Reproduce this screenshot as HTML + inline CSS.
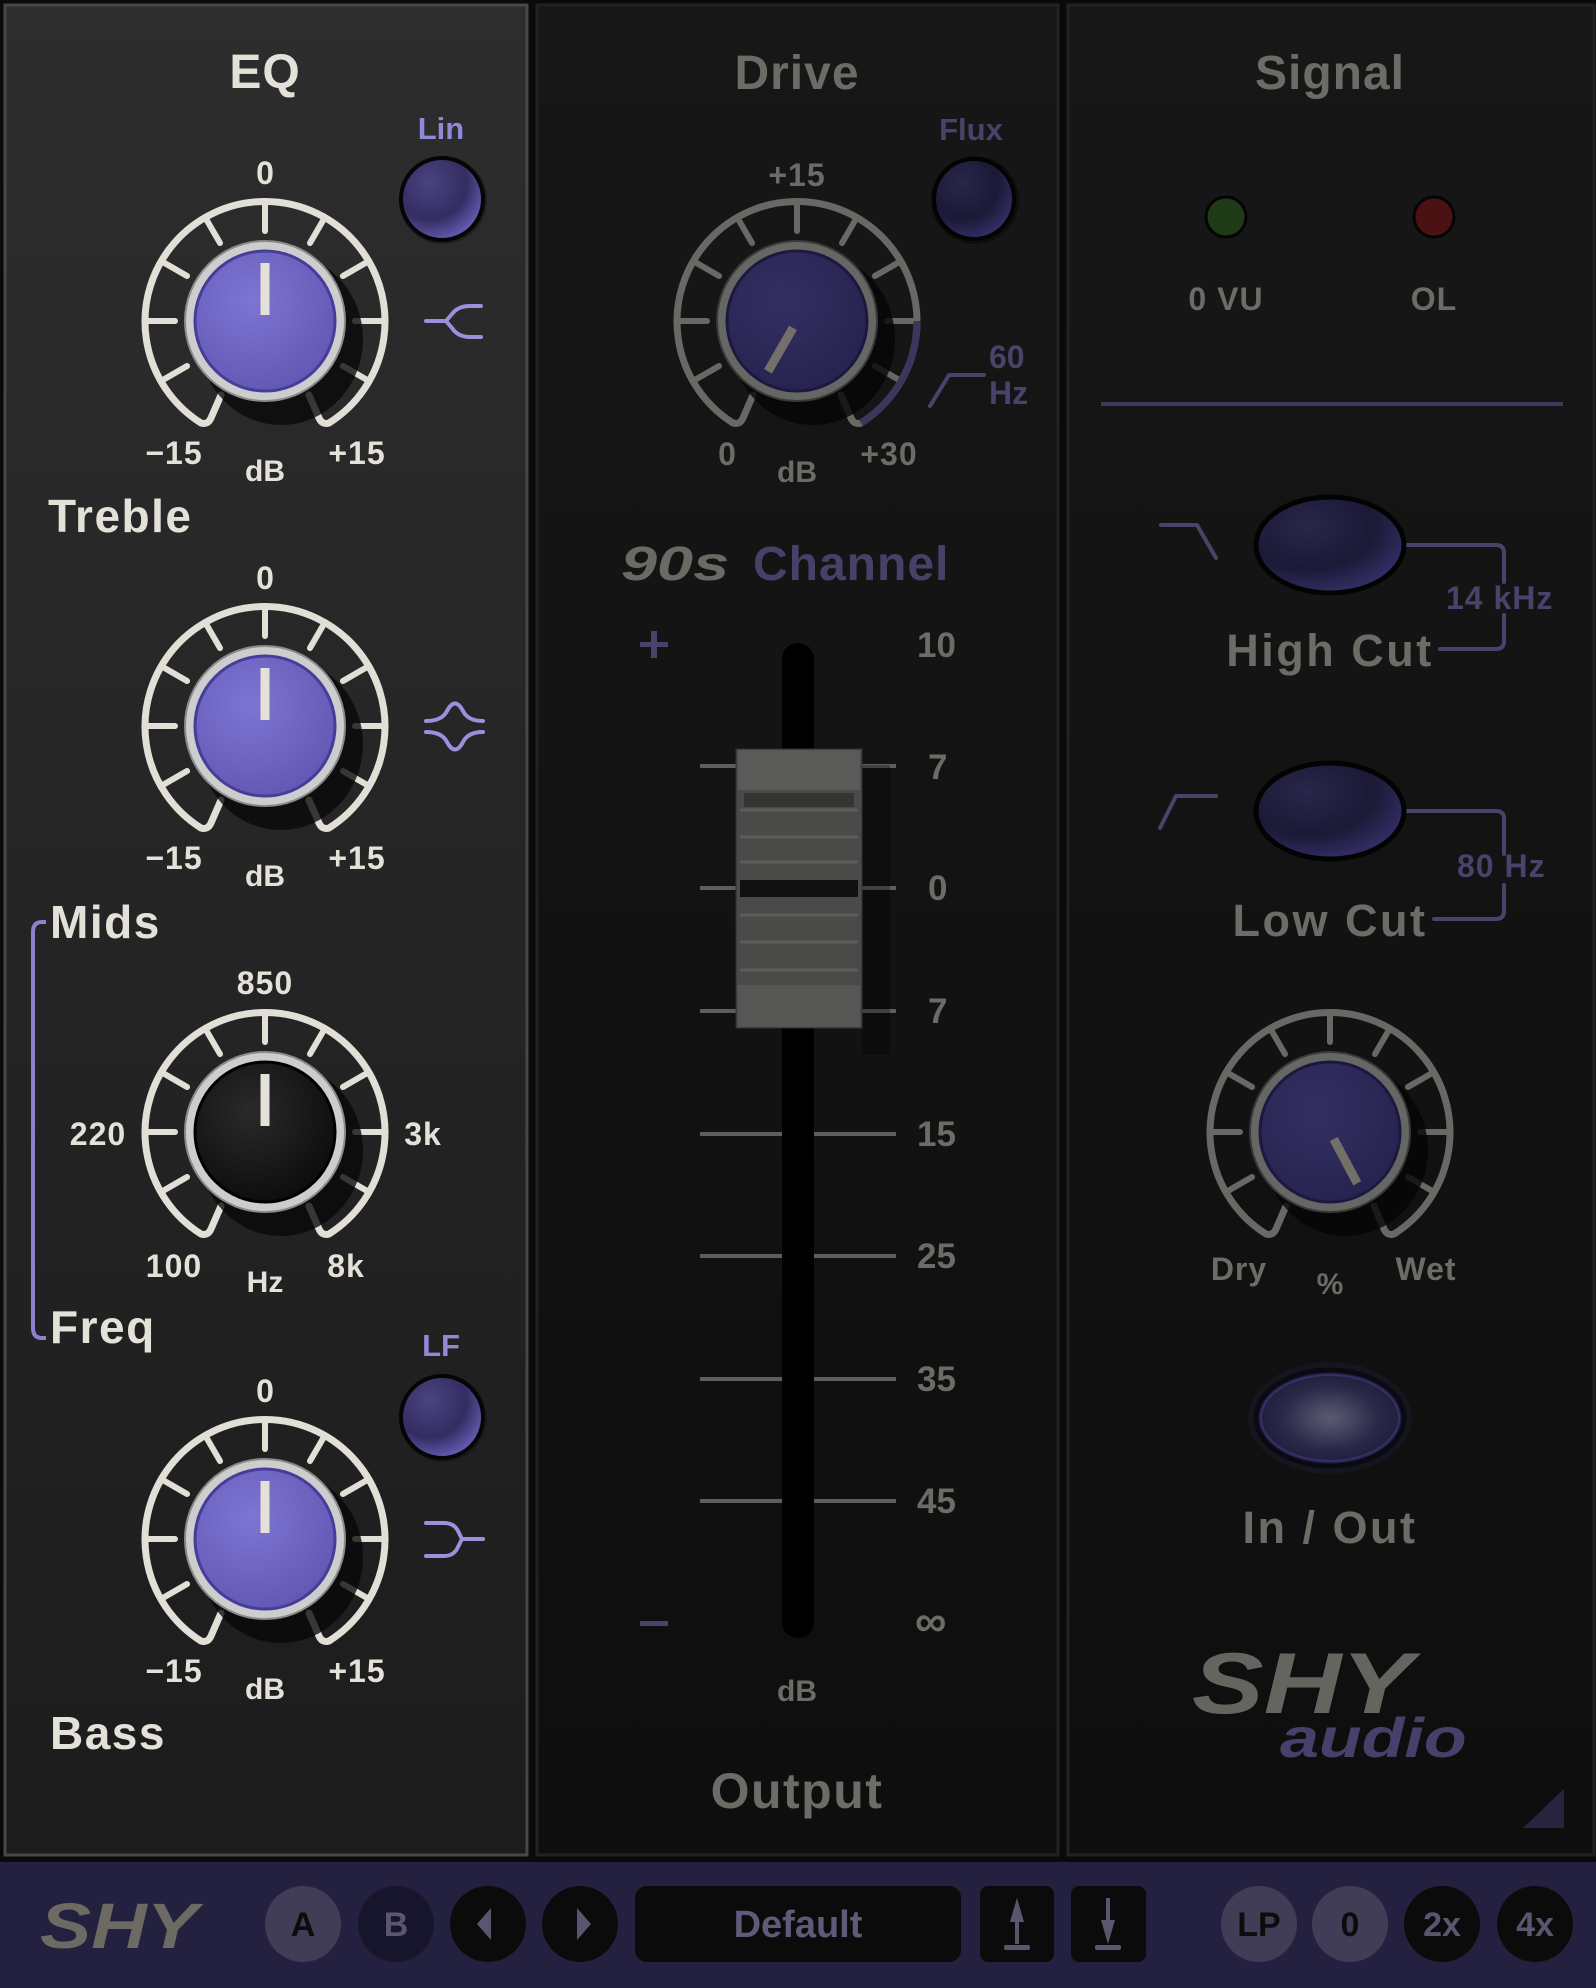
<!DOCTYPE html>
<html><head><meta charset="utf-8"><style>
html,body{margin:0;padding:0;background:#0a0a0a;}
svg{display:block;}
text{font-family:"Liberation Sans",sans-serif;font-weight:bold;}
.n{font-family:"Liberation Sans Narrow","Liberation Sans",sans-serif;}
</style></head><body>
<svg width="1596" height="1988" viewBox="0 0 1596 1988" xmlns="http://www.w3.org/2000/svg">
<defs>
<linearGradient id="pl" x1="0" y1="0" x2="0" y2="1"><stop offset="0" stop-color="#2d2d2d"/><stop offset="1" stop-color="#1c1c1c"/></linearGradient>
<linearGradient id="pd" x1="0" y1="0" x2="0" y2="1"><stop offset="0" stop-color="#171717"/><stop offset="1" stop-color="#0e0e0e"/></linearGradient>
<radialGradient id="capL" cx="0.4" cy="0.35" r="0.7"><stop offset="0" stop-color="#7e74d2"/><stop offset="1" stop-color="#6258b4"/></radialGradient>
<radialGradient id="capB" cx="0.4" cy="0.35" r="0.7"><stop offset="0" stop-color="#2a2a2a"/><stop offset="1" stop-color="#0c0c0c"/></radialGradient>
<radialGradient id="capD" cx="0.4" cy="0.35" r="0.7"><stop offset="0" stop-color="#332f62"/><stop offset="1" stop-color="#27234f"/></radialGradient>
<radialGradient id="btnL" cx="0.35" cy="0.3" r="0.75"><stop offset="0" stop-color="#4a4380"/><stop offset="0.6" stop-color="#332d62"/><stop offset="1" stop-color="#6a5fb8"/></radialGradient>
<radialGradient id="btnD" cx="0.35" cy="0.3" r="0.75"><stop offset="0" stop-color="#29264a"/><stop offset="0.6" stop-color="#1b1936"/><stop offset="1" stop-color="#34306a"/></radialGradient>
<radialGradient id="io" cx="0.5" cy="0.5" r="0.55"><stop offset="0" stop-color="#5c5a72"/><stop offset="0.6" stop-color="#2a2848"/><stop offset="1" stop-color="#1c1a36"/></radialGradient>
<g id="ringL" fill="none" stroke="#e2e0d6" stroke-width="7" stroke-linecap="round" stroke-linejoin="round">
<path d="M-44,74 L-54,97 Q-57,104 -64,102 A120 120 0 1 1 64,102 Q57,104 54,97 L44,74"/>
<g stroke-width="6">
<line x1="0" y1="-120" x2="0" y2="-90"/>
<line x1="0" y1="-120" x2="0" y2="-90" transform="rotate(30)"/>
<line x1="0" y1="-120" x2="0" y2="-90" transform="rotate(60)"/>
<line x1="0" y1="-120" x2="0" y2="-90" transform="rotate(90)"/>
<line x1="0" y1="-120" x2="0" y2="-90" transform="rotate(120)"/>
<line x1="0" y1="-120" x2="0" y2="-90" transform="rotate(-30)"/>
<line x1="0" y1="-120" x2="0" y2="-90" transform="rotate(-60)"/>
<line x1="0" y1="-120" x2="0" y2="-90" transform="rotate(-90)"/>
<line x1="0" y1="-120" x2="0" y2="-90" transform="rotate(-120)"/>
</g></g>
<g id="ringD" fill="none" stroke="#686864" stroke-width="7" stroke-linecap="round" stroke-linejoin="round">
<path d="M-44,74 L-54,97 Q-57,104 -64,102 A120 120 0 1 1 64,102 Q57,104 54,97 L44,74"/>
<g stroke-width="6">
<line x1="0" y1="-120" x2="0" y2="-90"/>
<line x1="0" y1="-120" x2="0" y2="-90" transform="rotate(30)"/>
<line x1="0" y1="-120" x2="0" y2="-90" transform="rotate(60)"/>
<line x1="0" y1="-120" x2="0" y2="-90" transform="rotate(90)"/>
<line x1="0" y1="-120" x2="0" y2="-90" transform="rotate(120)"/>
<line x1="0" y1="-120" x2="0" y2="-90" transform="rotate(-30)"/>
<line x1="0" y1="-120" x2="0" y2="-90" transform="rotate(-60)"/>
<line x1="0" y1="-120" x2="0" y2="-90" transform="rotate(-90)"/>
<line x1="0" y1="-120" x2="0" y2="-90" transform="rotate(-120)"/>
</g></g>
</defs>

<rect width="1596" height="1988" fill="#0a0a0a"/>
<rect x="5" y="5" width="522" height="1850" fill="url(#pl)" stroke="#474747" stroke-width="3"/>
<rect x="537" y="5" width="521" height="1850" fill="url(#pd)" stroke="#222" stroke-width="3"/>
<rect x="1068" y="5" width="526" height="1850" fill="url(#pd)" stroke="#222" stroke-width="3"/>

<!-- ===== LEFT: EQ ===== -->
<g fill="#e4e2d8" text-anchor="middle" font-size="32">
<text x="265" y="88" font-size="48" letter-spacing="1">EQ</text>
<text x="265" y="184">0</text>
<text x="174" y="464" letter-spacing="1">−15</text>
<text x="265" y="481" font-size="30">dB</text>
<text x="357" y="464" letter-spacing="1">+15</text>
<text x="265" y="589">0</text>
<text x="174" y="869" letter-spacing="1">−15</text>
<text x="265" y="886" font-size="30">dB</text>
<text x="357" y="869" letter-spacing="1">+15</text>
<text x="265" y="994" letter-spacing="1">850</text>
<text x="98" y="1145" letter-spacing="1">220</text>
<text x="423" y="1145" letter-spacing="1">3k</text>
<text x="174" y="1277" letter-spacing="1">100</text>
<text x="265" y="1292" font-size="30">Hz</text>
<text x="346" y="1277" letter-spacing="1">8k</text>
<text x="265" y="1402">0</text>
<text x="174" y="1682" letter-spacing="1">−15</text>
<text x="265" y="1699" font-size="30">dB</text>
<text x="357" y="1682" letter-spacing="1">+15</text>
</g>
<g fill="#e4e2d8" font-size="46" letter-spacing="1.5">
<text x="48" y="532">Treble</text>
<text x="50" y="938">Mids</text>
<text x="50" y="1343">Freq</text>
<text x="50" y="1749">Bass</text>
</g>
<g fill="#9088d8" font-size="31" text-anchor="middle">
<text x="441" y="139">Lin</text>
<text x="441" y="1356">LF</text>
</g>
<path d="M46,922 H42 Q33,922 33,932 V1328 Q33,1338 42,1338 H46" fill="none" stroke="#8a82cc" stroke-width="4"/>

<g transform="translate(265,321)">
<use href="#ringL"/><ellipse cx="16" cy="18" rx="82" ry="86" fill="#080808" opacity="0.78"/>
<circle r="80" fill="#cdcdcd" stroke="#8a8a8a" stroke-width="2"/><circle r="70" fill="url(#capL)" stroke="#463c9a" stroke-width="3"/>
<line x1="0" y1="-58" x2="0" y2="-6" stroke="#e4e2d8" stroke-width="9"/></g>
<g transform="translate(265,726)">
<use href="#ringL"/><ellipse cx="16" cy="18" rx="82" ry="86" fill="#080808" opacity="0.78"/>
<circle r="80" fill="#cdcdcd" stroke="#8a8a8a" stroke-width="2"/><circle r="70" fill="url(#capL)" stroke="#463c9a" stroke-width="3"/>
<line x1="0" y1="-58" x2="0" y2="-6" stroke="#e4e2d8" stroke-width="9"/></g>
<g transform="translate(265,1132)">
<use href="#ringL"/><ellipse cx="16" cy="18" rx="82" ry="86" fill="#080808" opacity="0.78"/>
<circle r="80" fill="#cdcdcd" stroke="#8a8a8a" stroke-width="2"/><circle r="70" fill="url(#capB)" stroke="#000" stroke-width="3"/>
<line x1="0" y1="-58" x2="0" y2="-6" stroke="#e4e2d8" stroke-width="9"/></g>
<g transform="translate(265,1539)">
<use href="#ringL"/><ellipse cx="16" cy="18" rx="82" ry="86" fill="#080808" opacity="0.78"/>
<circle r="80" fill="#cdcdcd" stroke="#8a8a8a" stroke-width="2"/><circle r="70" fill="url(#capL)" stroke="#463c9a" stroke-width="3"/>
<line x1="0" y1="-58" x2="0" y2="-6" stroke="#e4e2d8" stroke-width="9"/></g>

<circle cx="443" cy="200" r="44" fill="#111" opacity="0.5"/>
<circle cx="442" cy="199" r="41" fill="url(#btnL)" stroke="#050505" stroke-width="4"/>
<circle cx="443" cy="1418" r="44" fill="#111" opacity="0.5"/>
<circle cx="442" cy="1417" r="41" fill="url(#btnL)" stroke="#050505" stroke-width="4"/>

<g fill="none" stroke="#9a90dc" stroke-width="4" stroke-linecap="round" stroke-linejoin="round">
<path d="M426,321 H446 M481,306 H470 Q458,306 452,314 L446,321 L452,328 Q458,337 470,337 H481"/>
<path d="M426,721 Q442,721 447,711 Q455,696 463,711 Q468,721 483,721"/>
<path d="M426,732 Q442,732 447,742 Q455,757 463,742 Q468,732 483,732"/>
<path d="M426,1523 H444 Q454,1523 458,1531 L462,1539 H483 M426,1556 H444 Q454,1556 458,1547 L462,1539"/>
</g>

<!-- ===== MIDDLE ===== -->
<g fill="#6c6c66" text-anchor="middle" font-size="32">
<text x="797" y="89" font-size="48" letter-spacing="1">Drive</text>
<text x="797" y="186" letter-spacing="1">+15</text>
<text x="727" y="465">0</text>
<text x="797" y="482" font-size="30">dB</text>
<text x="889" y="465" letter-spacing="1">+30</text>
<text x="797" y="1701" font-size="30">dB</text>
<text x="797" y="1808" font-size="50" letter-spacing="1.5">Output</text>
</g>
<text x="971" y="140" font-size="31" fill="#47436a" text-anchor="middle">Flux</text>
<g fill="#47436a" font-size="32"><text x="989" y="368">60</text><text x="989" y="404">Hz</text></g>
<path d="M930,406 L949,375 H984" fill="none" stroke="#47436a" stroke-width="4" stroke-linecap="round" stroke-linejoin="round"/>
<text x="0" y="0" font-size="48" font-style="italic" fill="#6a6a64" transform="translate(621,580) scale(1.35,1)">90s</text>
<text x="753" y="580" font-size="48" fill="#454168" letter-spacing="1">Channel</text>

<g transform="translate(797,321)">
<use href="#ringD"/>
<path d="M120,0 A120 120 0 0 1 64,102" fill="none" stroke="#3a365c" stroke-width="7"/>
<ellipse cx="16" cy="18" rx="82" ry="86" fill="#050505" opacity="0.8"/>
<circle r="80" fill="#666664" stroke="#3a3a3a" stroke-width="2"/><circle r="70" fill="url(#capD)" stroke="#1c1940" stroke-width="3"/>
<line x1="0" y1="-58" x2="0" y2="-8" stroke="#727068" stroke-width="9" transform="rotate(-150)"/></g>
<circle cx="975" cy="200" r="44" fill="#000" opacity="0.4"/>
<circle cx="974" cy="199" r="40" fill="url(#btnD)" stroke="#030303" stroke-width="4"/>

<g fill="#6c6c66" font-size="35">
<text x="917" y="657">10</text>
<text x="928" y="779">7</text>
<text x="928" y="900">0</text>
<text x="928" y="1023">7</text>
<text x="917" y="1146">15</text>
<text x="917" y="1268">25</text>
<text x="917" y="1391">35</text>
<text x="917" y="1513">45</text>
<text x="915" y="1636" font-size="44">∞</text>
</g>
<g fill="#47436a"><rect x="640" y="642" width="28" height="5"/><rect x="651" y="631" width="6" height="27"/><rect x="640" y="1621" width="28" height="5"/></g>
<g stroke="#5e5e5a" stroke-width="4">
<line x1="700" y1="766" x2="782" y2="766"/><line x1="814" y1="766" x2="896" y2="766"/>
<line x1="700" y1="888" x2="782" y2="888"/><line x1="814" y1="888" x2="896" y2="888"/>
<line x1="700" y1="1011" x2="782" y2="1011"/><line x1="814" y1="1011" x2="896" y2="1011"/>
<line x1="700" y1="1134" x2="782" y2="1134"/><line x1="814" y1="1134" x2="896" y2="1134"/>
<line x1="700" y1="1256" x2="782" y2="1256"/><line x1="814" y1="1256" x2="896" y2="1256"/>
<line x1="700" y1="1379" x2="782" y2="1379"/><line x1="814" y1="1379" x2="896" y2="1379"/>
<line x1="700" y1="1501" x2="782" y2="1501"/><line x1="814" y1="1501" x2="896" y2="1501"/>
</g>
<rect x="782" y="643" width="32" height="995" rx="16" fill="#000"/>
<rect x="862" y="765" width="28" height="290" fill="#000" opacity="0.3"/>
<rect x="736" y="749" width="126" height="279" fill="#4a4a48" stroke="#333" stroke-width="1"/>
<rect x="738" y="750" width="122" height="40" fill="#5a5a58"/>
<rect x="744" y="793" width="110" height="14" fill="#353533"/>
<g stroke="#5c5c5a" stroke-width="3">
<line x1="740" y1="810" x2="858" y2="810"/><line x1="740" y1="837" x2="858" y2="837"/><line x1="740" y1="862" x2="858" y2="862"/>
<line x1="740" y1="915" x2="858" y2="915"/><line x1="740" y1="942" x2="858" y2="942"/><line x1="740" y1="970" x2="858" y2="970"/>
</g>
<rect x="740" y="880" width="118" height="17" fill="#111"/>
<rect x="738" y="985" width="122" height="42" fill="#565654"/>

<!-- ===== RIGHT ===== -->
<g fill="#6c6c66" text-anchor="middle" font-size="32">
<text x="1330" y="89" font-size="48" letter-spacing="1">Signal</text>
<text x="1226" y="310" letter-spacing="1">0 VU</text>
<text x="1434" y="310" letter-spacing="1">OL</text>
<text x="1330" y="666" font-size="45" letter-spacing="2.5">High Cut</text>
<text x="1330" y="936" font-size="45" letter-spacing="2.5">Low Cut</text>
<text x="1239" y="1280" letter-spacing="1">Dry</text>
<text x="1330" y="1294" font-size="30">%</text>
<text x="1426" y="1280" letter-spacing="1">Wet</text>
<text x="1330" y="1543" font-size="45" letter-spacing="2.5">In / Out</text>
</g>
<circle cx="1226" cy="217" r="20" fill="#1e3a16" stroke="#050505" stroke-width="3"/>
<circle cx="1434" cy="217" r="20" fill="#4a1212" stroke="#050505" stroke-width="3"/>
<line x1="1101" y1="404" x2="1563" y2="404" stroke="#3e3a5e" stroke-width="4"/>

<g fill="none" stroke="#47436a" stroke-width="4" stroke-linecap="round" stroke-linejoin="round">
<path d="M1161,525 H1197 L1216,558"/>
<path d="M1160,828 L1176,796 H1216"/>
<path d="M1402,545 H1496 Q1504,545 1504,553 V582 M1504,615 V641 Q1504,649 1496,649 H1440"/>
<path d="M1402,811 H1496 Q1504,811 1504,819 V854 M1504,885 V911 Q1504,919 1496,919 H1434"/>
</g>
<g fill="#47436a" font-size="32" letter-spacing="1"><text x="1446" y="609">14 kHz</text><text x="1457" y="877">80 Hz</text></g>
<ellipse cx="1330" cy="545" rx="74" ry="48" fill="url(#btnD)" stroke="#030303" stroke-width="5"/>
<ellipse cx="1330" cy="811" rx="74" ry="48" fill="url(#btnD)" stroke="#030303" stroke-width="5"/>
<ellipse cx="1330" cy="1418" rx="82" ry="56" fill="#3a3670" opacity="0.15"/>
<ellipse cx="1330" cy="1418" rx="74" ry="48" fill="url(#io)" stroke="#0a0a14" stroke-width="5"/>
<ellipse cx="1330" cy="1418" rx="69" ry="43" fill="none" stroke="#34306a" stroke-width="2"/>

<g transform="translate(1330,1132)">
<use href="#ringD"/><ellipse cx="16" cy="18" rx="82" ry="86" fill="#050505" opacity="0.8"/>
<circle r="80" fill="#666664" stroke="#3a3a3a" stroke-width="2"/><circle r="70" fill="url(#capD)" stroke="#1c1940" stroke-width="3"/>
<line x1="0" y1="-58" x2="0" y2="-8" stroke="#727068" stroke-width="9" transform="rotate(152)"/></g>

<text x="0" y="0" font-size="86" font-style="italic" fill="#656560" transform="translate(1192,1713) scale(1.25,1)">SHY</text>
<text x="0" y="0" font-size="56" font-style="italic" fill="#45416a" transform="translate(1280,1757) scale(1.25,1)">audio</text>
<path d="M1564,1789 V1828 H1523 Z" fill="#27243f"/>

<!-- ===== BOTTOM BAR ===== -->
<rect x="0" y="1862" width="1596" height="126" fill="#24203f"/>
<text x="0" y="0" font-size="64" font-style="italic" fill="#6c6a62" transform="translate(40,1948) scale(1.2,1)">SHY</text>
<circle cx="303" cy="1924" r="38" fill="#413d56"/>
<circle cx="396" cy="1924" r="38" fill="#17152b"/>
<circle cx="488" cy="1924" r="38" fill="#0b0b0b"/>
<circle cx="580" cy="1924" r="38" fill="#0b0b0b"/>
<rect x="635" y="1886" width="326" height="76" rx="12" fill="#0b0b0b"/>
<rect x="980" y="1886" width="74" height="76" rx="8" fill="#0b0b0b"/>
<rect x="1071" y="1886" width="75" height="76" rx="8" fill="#0b0b0b"/>
<circle cx="1259" cy="1924" r="38" fill="#413d56"/>
<circle cx="1350" cy="1924" r="38" fill="#413d56"/>
<circle cx="1442" cy="1924" r="38" fill="#0b0b0b"/>
<circle cx="1535" cy="1924" r="38" fill="#0b0b0b"/>
<g class="n" font-size="34" text-anchor="middle">
<text class="n" x="303" y="1936" fill="#0c0c0c">A</text>
<text class="n" x="396" y="1936" fill="#5a5670">B</text>
<text class="n" x="798" y="1937" font-size="38" fill="#5e5a78">Default</text>
<text class="n" x="1259" y="1936" fill="#0c0c0c">LP</text>
<text class="n" x="1350" y="1936" fill="#0c0c0c">0</text>
<text class="n" x="1442" y="1936" fill="#5a5670">2x</text>
<text class="n" x="1535" y="1936" fill="#5a5670">4x</text>
</g>
<g fill="#5a5670">
<path d="M477,1924 L491,1908 V1940 Z"/>
<path d="M591,1924 L577,1908 V1940 Z"/>
<path d="M1017,1898 L1024,1922 H1010 Z"/><rect x="1015" y="1918" width="4" height="26"/><rect x="1004" y="1945" width="26" height="5" rx="2"/>
<path d="M1108,1944 L1101,1920 H1115 Z"/><rect x="1106" y="1898" width="4" height="24"/><rect x="1095" y="1945" width="26" height="5" rx="2"/>
</g>
</svg>
</body></html>
